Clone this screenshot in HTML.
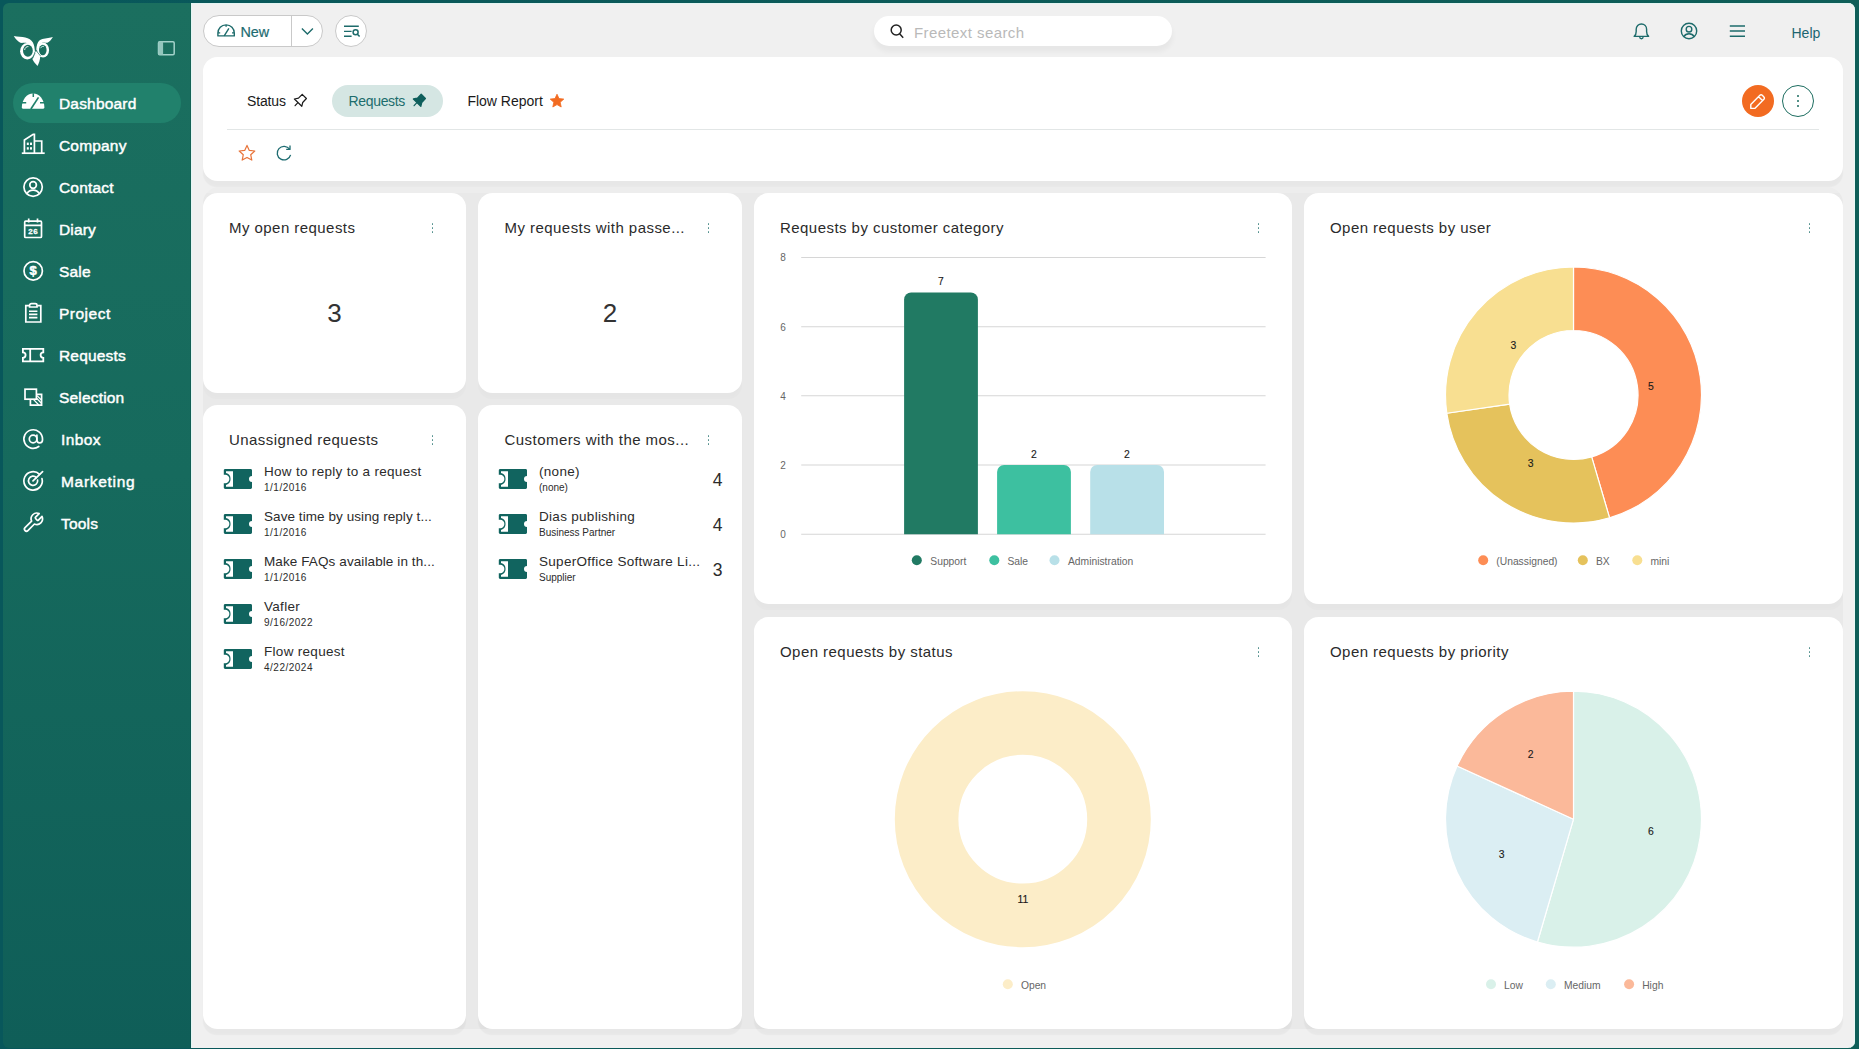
<!DOCTYPE html>
<html lang="en">
<head>
<meta charset="utf-8">
<title>Dashboard</title>
<style>
*{box-sizing:border-box;margin:0;padding:0}
html,body{width:1859px;height:1049px;overflow:hidden;background:#0d5c5a;font-family:"Liberation Sans",sans-serif;color:#2b2b2b}
.abs{position:absolute}
#frame{position:absolute;left:0;top:0;width:1859px;height:1049px;background:linear-gradient(90deg,#08575b 0%,#0c5b59 50%,#0e5e58 100%)}
#side{position:absolute;left:3px;top:3px;width:188px;height:1045px;border-radius:6px 0 0 6px;box-shadow:inset -1px 0 0 rgba(0,40,40,.16);background:linear-gradient(180deg,#1b6f5f 0%,#166a5d 45%,#0f5e58 100%)}
#main{position:absolute;left:191px;top:3px;width:1664px;height:1045px;background:#f0f0f0;border-radius:0 7px 7px 0;box-shadow:inset 1px 0 0 #e3f6f4,inset -1px 0 0 #e9f8f6,inset 0 1px 0 #e3f4f2}
.nav{position:absolute;left:10.4px;width:167.8px;height:40px;border-radius:20px;color:#fff;font-size:15.5px;letter-spacing:.18px;-webkit-text-stroke:.45px #fff}
.nav.on{background:#21816c}
.nav span{position:absolute;margin-left:.6px;top:11.2px;line-height:20px;white-space:nowrap}
.nav svg{position:absolute;left:7.6px;top:7.5px;width:24px;height:24px;overflow:visible}
.card{position:absolute;background:#fff;border-radius:14.5px;box-shadow:0 6.5px 1.2px -.6px rgba(0,0,0,.035)}
.card.in{box-shadow:0 6.5px 1.2px -.6px rgba(0,0,0,.016)}
#grid{position:absolute;left:12px;top:184px;width:1640px;height:842px;border-radius:16px;background:linear-gradient(180deg,#ededed 0,#ededed 6px,#e9e9e9 6px)}
.ttl{position:absolute;left:26px;top:25.3px;font-size:15px;line-height:20px;color:#2b2b2b;white-space:nowrap;letter-spacing:.45px}
.dots{position:absolute;top:30px;width:3px;height:11px}
.dots i{position:absolute;left:0;width:1.8px;height:1.8px;border-radius:1px;background:#4d8d8a}
.dots i:nth-child(1){top:0}.dots i:nth-child(2){top:4px}.dots i:nth-child(3){top:8px}
.big{position:absolute;left:0;right:0;text-align:center;top:104px;font-size:26px;line-height:32px;color:#333}
.row{position:absolute;left:0;right:0;height:45px}
.row svg{position:absolute;left:20.2px;top:11.5px;width:30px;height:22px}
.row b{position:absolute;left:61px;top:6.5px;font-weight:normal;font-size:13.5px;line-height:17px;color:#2b2b2b;white-space:nowrap}
.row small{position:absolute;left:61px;top:25.3px;text-decoration:none;font-size:10px;line-height:12px;color:#2b2b2b;white-space:nowrap}
.row em{position:absolute;right:19.5px;top:11.7px;font-style:normal;font-size:17.5px;line-height:24px;color:#2b2b2b}
.tab{font-size:14px;line-height:18px;color:#1a1a1a;white-space:nowrap}
svg text{font-family:"Liberation Sans",sans-serif}
</style>
</head>
<body>
<div id="frame">
<div id="side">
  <svg class="abs" style="left:7px;top:29px;width:48px;height:38px" viewBox="10 32 48 38">
    <g fill="#fff">
      <ellipse cx="27.3" cy="51.2" rx="7.2" ry="8.2"/>
      <ellipse cx="43.1" cy="50" rx="6" ry="7.45"/>
      <path d="M13.8 36.1C17.6 36.9 22 36.9 25.3 37.6C28.6 38.3 31.4 40 32.9 42.6C34.2 45 34.7 48 34.8 51.6L33.2 54.4C33 49.4 31.4 45 27.4 43.2C24.6 42.4 22.4 43.2 20.3 42.8C17.8 41.6 15.6 39.2 13.8 36.1Z"/>
      <path d="M52.9 37.1C50.6 38 46 38.4 42.4 39C39.8 39.6 38 41.4 37.1 44.5C36.6 46.2 36.4 48 36.3 49.6L37.4 51.6C37.6 47.4 39.4 43.6 43 42.6C45 42.6 46.2 43 47.4 42.8C49.6 41.6 51.4 39.8 52.9 37.1Z"/>
      <path d="M36 50.8L38.4 52.6L40.3 56.3C40 60 39 63.4 37.5 66C35.4 63.8 33.6 61.6 32.4 59L34.5 53.6Z"/>
    </g>
    <g fill="#1a6e5e">
      <ellipse cx="27.9" cy="50.7" rx="4.9" ry="6"/>
      <ellipse cx="42.8" cy="50" rx="3.8" ry="5.3"/>
    </g>
    <path d="M35.1 52.8L32.6 58.6M36.4 51L40.6 56" fill="none" stroke="#1a6e5e" stroke-width=".7"/>
    <path d="M24.6 50C25 47.6 26.6 46.4 28.4 46.6" fill="none" stroke="#fff" stroke-width=".9"/>
    <path d="M40.6 48.2C41.2 46.6 42.6 46 44 46.4" fill="none" stroke="#c8f3ea" stroke-width=".9"/>
  </svg>
  <svg class="abs" style="left:154px;top:37px;width:19px;height:17px" viewBox="0 0 19 17">
    <rect x="1.5" y="1.7" width="15.7" height="13" rx="1.2" fill="none" stroke="#a3d2ca" stroke-width="1.5"/>
    <rect x="1.5" y="1.7" width="4.6" height="13" fill="#93c6bd"/>
  </svg>

  <div class="nav on" style="top:80px"><svg viewBox="0 .8 24 24"><path d="M.8 17.4 C.8 9.6 5.8 3.4 12.1 3.4 C18.4 3.4 23.4 9.6 23.4 17.4 C23.4 18.1 22.9 18.5 22.3 18.5 H1.9 C1.3 18.5 .8 18.1 .8 17.4Z" fill="#fff"/><g stroke="#21816c" stroke-width="1.5" fill="none"><path d="M9.9 18.8 L17.5 7.2" stroke-width="1.7"/><path d="M.5 12.6H5.2M19 12.6H23.8M12.3 3V6.8"/></g></svg><span style="left:45px">Dashboard</span></div>

  <div class="nav" style="top:122px"><svg viewBox="0 .6 24 24"><g fill="none" stroke="#fff" stroke-width="1.7"><path d="M.8 20.8H23.7"/><path d="M3.4 20.8V7.6L12.2 2H13.4V20.8"/><path d="M13.4 8.6H20.7V20.8"/></g><g fill="#fff"><rect x="5.8" y="10.2" width="2" height="2.4"/><rect x="9" y="10.2" width="2" height="2.4"/><rect x="5.8" y="14.8" width="2" height="2.4"/><rect x="9" y="14.8" width="2" height="2.4"/></g></svg><span style="left:45px">Company</span></div>

  <div class="nav" style="top:164px"><svg viewBox="0 0 24 24"><g fill="none" stroke="#fff" stroke-width="1.7"><circle cx="12.1" cy="12.1" r="9.2"/><circle cx="12.1" cy="10" r="3.3"/><path d="M5.9 18.7C7.3 16.2 9.5 15.2 12.1 15.2C14.7 15.2 16.9 16.2 18.3 18.7"/></g></svg><span style="left:45px">Contact</span></div>

  <div class="nav" style="top:206px"><svg viewBox="0 0 24 24"><g fill="none" stroke="#fff" stroke-width="1.7"><rect x="3.7" y="4.2" width="16.8" height="16.3" rx="1"/><path d="M3.7 8.4H20.5M7.7 1.6V5.4M16.5 1.6V5.4"/></g><text x="12.3" y="17.4" text-anchor="middle" font-size="8" font-weight="bold" fill="#fff" stroke="#fff" stroke-width=".3" letter-spacing=".5">26</text></svg><span style="left:45px">Diary</span></div>

  <div class="nav" style="top:248px"><svg viewBox="0 0 24 24"><circle cx="12.2" cy="11.9" r="9.2" fill="none" stroke="#fff" stroke-width="1.7"/><text x="12.2" y="16.4" text-anchor="middle" font-size="13" font-weight="bold" fill="#fff" stroke="#fff" stroke-width=".5">$</text></svg><span style="left:45px">Sale</span></div>

  <div class="nav" style="top:290px"><svg viewBox="0 0 24 24"><g fill="none" stroke="#fff" stroke-width="1.7"><path d="M8.4 4.6H4.8V21H19.8V4.6H16.2"/><path d="M8.6 6V4.2C8.6 3.2 9.4 2.6 10.4 2.6H14.2C15.2 2.6 16 3.2 16 4.2V6Z"/><path d="M8 10.2H16.4M8 13.4H16.4M8 16.6H16.4" stroke-width="1.6"/></g></svg><span style="left:45px;letter-spacing:.5px">Project</span></div>

  <div class="nav" style="top:332px"><svg viewBox="0 0 24 24"><g fill="none" stroke="#fff" stroke-width="1.8"><path d="M1.9 5.8H22.3V9.4A2.7 2.7 0 0 0 22.3 14.8V18.3H1.9V14.8A2.7 2.7 0 0 0 1.9 9.4Z"/><path d="M9.2 5.8V18.3"/></g></svg><span style="left:45px">Requests</span></div>

  <div class="nav" style="top:374px"><svg viewBox="0 0 24 24"><g fill="none" stroke="#fff" stroke-width="1.7"><rect x="4" y="4.2" width="11.4" height="10"/><path d="M15.4 9.4H20.6V20.2H9.4V14.2"/><path d="M12.6 14.6L17.8 20M15.6 13.2L20.4 18.2M16 10.6L20.4 15" stroke-width="1.3"/></g></svg><span style="left:45px">Selection</span></div>

  <div class="nav" style="top:416px"><svg viewBox="0 0 24 24"><g fill="none" stroke="#fff" stroke-width="1.7" stroke-linecap="round"><circle cx="12.1" cy="12" r="3.8"/><path d="M15.9 8.2v4.9a2.8 2.8 0 0 0 5.6 0v-1.1a9.3 9.3 0 1 0-3.7 7.5"/></g></svg><span style="left:47px;letter-spacing:.4px">Inbox</span></div>

  <div class="nav" style="top:458px"><svg viewBox="0 0 24 24"><g fill="none" stroke="#fff" stroke-width="1.7" stroke-linecap="round"><path d="M18.6 5.4A9.2 9.2 0 1 0 21 9.6"/><path d="M15.4 8.6A4.6 4.6 0 1 0 16.6 11"/><path d="M12 11.8L21.6 2.6"/></g></svg><span style="left:47px;letter-spacing:.7px">Marketing</span></div>

  <div class="nav" style="top:500px"><svg viewBox="0 0 24 24"><path transform="translate(.6 .2) scale(.95)" d="M14.7 6.3a1 1 0 0 0 0 1.4l1.6 1.6a1 1 0 0 0 1.4 0l3.77-3.77a6 6 0 0 1-7.94 7.94l-6.91 6.91a2.12 2.12 0 0 1-3-3l6.91-6.91a6 6 0 0 1 7.94-7.94l-3.76 3.76z" fill="none" stroke="#fff" stroke-width="1.8" stroke-linejoin="round"/></svg><span style="left:47px">Tools</span></div>
</div>
<div id="main">
  <!-- top bar (coords relative to main: abs - (191,3)) -->
  <div class="abs" style="left:12px;top:12px;width:120px;height:32px;border:1px solid #c9c9c9;border-radius:16px;background:#fff"></div>
  <div class="abs" style="left:100px;top:13px;width:1px;height:30px;background:#c9c9c9"></div>
  <svg class="abs" style="left:25px;top:19px;width:20px;height:16px" viewBox="0 0 20 16"><g fill="none" stroke="#1d6b6b" stroke-width="1.4" stroke-linejoin="round"><path d="M1.9 13.9V11.2C1.9 6.4 5.4 2.9 10.1 2.9C14.8 2.9 18.3 6.4 18.3 11.2V13.9Z"/><path d="M8.2 13.9L12.9 6.3M1.9 10.9H4.2M16 10.9H18.3M10.1 2.9V4.8"/></g></svg>
  <div class="abs" style="left:49.5px;top:20px;font-size:14.4px;line-height:18px;color:#1d6b70;letter-spacing:-.1px;-webkit-text-stroke:.2px #1d6b70">New</div>
  <svg class="abs" style="left:109px;top:23px;width:14px;height:10px" viewBox="0 0 14 10"><path d="M1.9 2.6L7.4 8L12.9 2.6" fill="none" stroke="#1d6b6b" stroke-width="1.4"/></svg>
  <div class="abs" style="left:144.2px;top:11.8px;width:32px;height:32px;border:1px solid #c9c9c9;border-radius:16px;background:#fff"></div>
  <svg class="abs" style="left:150px;top:20px;width:20px;height:16px" viewBox="0 0 20 16"><g fill="none" stroke="#1d6b6b" stroke-width="1.4"><path d="M3 3.3H17.8M3 8.4H10.6M3 13.2H10.6"/><circle cx="14.6" cy="9.3" r="2.5" stroke-width="1.5"/><path d="M16.4 11.2L18.6 13.6" stroke-width="1.5"/></g></svg>

  <div class="abs" style="left:683px;top:12.7px;width:298px;height:30.3px;border-radius:15.2px;background:#fff;box-shadow:0 5px 5px 1px rgba(0,0,0,.04)"></div>
  <svg class="abs" style="left:697px;top:19px;width:18px;height:18px" viewBox="0 0 18 18"><g fill="none" stroke="#222" stroke-width="1.5"><circle cx="8.2" cy="8" r="5"/><path d="M11.6 11.8L15.2 15.8"/></g></svg>
  <div class="abs" style="left:723px;top:19.8px;font-size:15px;line-height:20px;color:#b9b9b9;letter-spacing:.42px">Freetext search</div>

  <svg class="abs" style="left:1440px;top:18px;width:20px;height:20px" viewBox="0 0 20 20"><g fill="none" stroke="#1d6b6b" stroke-width="1.4" stroke-linejoin="round"><path d="M3.2 15.4C4.8 14 5.2 12.6 5.2 10.4V8.2C5.2 5.2 7.4 3 10.4 3C13.4 3 15.6 5.2 15.6 8.2V10.4C15.6 12.6 16 14 17.6 15.4Z"/><path d="M8.6 16.2C8.8 17.2 9.5 17.7 10.4 17.7C11.3 17.7 12 17.2 12.2 16.2"/></g></svg>
  <svg class="abs" style="left:1488px;top:18px;width:20px;height:20px" viewBox="0 0 20 20"><g fill="none" stroke="#1d6b6b" stroke-width="1.4"><circle cx="10" cy="10" r="7.7"/><circle cx="10" cy="8.2" r="2.8"/><path d="M4.9 15.6C6 13.5 7.8 12.7 10 12.7C12.2 12.7 14 13.5 15.1 15.6"/></g></svg>
  <svg class="abs" style="left:1536px;top:18px;width:20px;height:20px" viewBox="0 0 20 20"><path d="M2.8 5H18M2.8 10.1H18M2.8 15.3H18" fill="none" stroke="#1d6b6b" stroke-width="1.5"/></svg>
  <div class="abs" style="left:1600.5px;top:20.5px;font-size:14px;line-height:18px;color:#1c6570">Help</div>
  <!-- header card -->
  <div class="card" style="left:12px;top:54px;width:1640px;height:123.5px">
    <div class="abs tab" style="left:44px;top:35px;letter-spacing:-.15px">Status</div>
    <svg class="abs" style="left:90px;top:36px;width:16px;height:16px" viewBox="0 0 16 16"><path d="M9.2 1.3L13.4 5.5L9.7 9.5L8.8 13.3L1.4 6L5.5 5.1ZM4.7 9.9L2.1 12.7" fill="none" stroke="#1a1a1a" stroke-width="1.2" stroke-linejoin="round" stroke-linecap="round"/></svg>
    <div class="abs" style="left:129px;top:28px;width:111px;height:31.6px;border-radius:16px;background:#d5e6e3"></div>
    <div class="abs tab" style="left:145.5px;top:35px;color:#1d6d6d;letter-spacing:-.33px">Requests</div>
    <svg class="abs" style="left:209.2px;top:36px;width:16px;height:16px" viewBox="0 0 16 16"><path d="M9.2 1.3L13.4 5.5L9.7 9.5L8.8 13.3L1.4 6L5.5 5.1Z" fill="#0f5f5c" stroke="#0f5f5c" stroke-width="1.3" stroke-linejoin="round"/><path d="M4.7 9.9L2.1 12.7" fill="none" stroke="#0f5f5c" stroke-width="1.2" stroke-linecap="round"/></svg>
    <div class="abs tab" style="left:264.4px;top:35px">Flow Report</div>
    <svg class="abs" style="left:346px;top:36px;width:16px;height:16px" viewBox="0 0 16 16"><path d="M8 1.2L10 5.6L14.8 6.1L11.2 9.3L12.2 14L8 11.6L3.8 14L4.8 9.3L1.2 6.1L6 5.6Z" fill="#f26b21" stroke="#f26b21" stroke-width=".8" stroke-linejoin="round"/></svg>
    <div class="abs" style="left:24px;top:72px;width:1592px;height:1px;background:#e2e6e6"></div>
    <svg class="abs" style="left:34px;top:86px;width:20px;height:20px" viewBox="0 0 20 20"><path d="M10 2.4L12.3 7.4L17.8 8L13.7 11.7L14.8 17.1L10 14.4L5.2 17.1L6.3 11.7L2.2 8L7.7 7.4Z" fill="none" stroke="#e8743a" stroke-width="1.2" stroke-linejoin="round"/></svg>
    <svg class="abs" style="left:71px;top:86px;width:20px;height:20px" viewBox="0 0 20 20"><g fill="none" stroke="#1d6b70" stroke-width="1.3"><path d="M15.6 6.2A6.8 6.8 0 1 0 16.6 11.8"/><path d="M12.2 6.4H16V2.6" stroke-linejoin="round"/></g></svg>
    <div class="abs" style="left:1539px;top:27.5px;width:32px;height:32px;border-radius:16px;background:#f26b21"></div>
    <svg class="abs" style="left:1545px;top:33.5px;width:20px;height:20px" viewBox="0 0 20 20"><path d="M2.8 13.4L11.9 4.3C12.6 3.6 13.6 3.6 14.3 4.3L15.9 5.9C16.6 6.6 16.6 7.6 15.9 8.3L6.8 17.4H2.8ZM10.6 5.7L14.5 9.6" fill="none" stroke="#fff" stroke-width="1.4" stroke-linejoin="round" transform="rotate(0 10 10)"/></svg>
    <div class="abs" style="left:1579px;top:27.5px;width:32px;height:32px;border-radius:16px;border:1px solid #1d6d60;background:#fff"></div>
    <div class="abs" style="left:1594px;top:37.5px;width:2px;height:2px;border-radius:1px;background:#1d6d60;box-shadow:0 5px 0 #1d6d60,0 10px 0 #1d6d60"></div>
  </div>
  <div id="grid"></div>
  <!--CARDS-BEGIN-->
  <div class="card in" style="left:12px;top:190px;width:263px;height:200px"><div class="ttl">My open requests</div><div class="dots" style="right:31.5px"><i></i><i></i><i></i></div><div class="big">3</div></div>
  <div class="card in" style="left:287px;top:190px;width:264px;height:200px"><div class="ttl" style="left:26.5px">My requests with passe...</div><div class="dots" style="right:31.5px"><i></i><i></i><i></i></div><div class="big">2</div></div>
  <div class="card" style="left:12px;top:402px;width:263px;height:624px"><div class="ttl" style="top:24.8px">Unassigned requests</div><div class="dots" style="right:31.5px"><i></i><i></i><i></i></div>
    <div class="row" style="top:51.5px"><svg viewBox="0 0 30 22"><path d="M2.2 1H27.6C28.4 1 29 1.6 29 2.4V8A3 3 0 0 0 29 14V19.6C29 20.4 28.4 21 27.6 21H2.2C1.4 21 .8 20.4 .8 19.6V15.2H2.2A4.1 4.1 0 0 0 2.2 6.8H.8V2.4C.8 1.6 1.4 1 2.2 1Z" fill="#11645f"/><path d="M3 3.2H10V18.8H3V16.9A6.1 6.1 0 0 0 3 5.1Z" fill="#fff"/></svg><b style="letter-spacing:0.3px">How to reply to a request</b><small style="letter-spacing:.5px">1/1/2016</small></div>
    <div class="row" style="top:96.5px"><svg viewBox="0 0 30 22"><path d="M2.2 1H27.6C28.4 1 29 1.6 29 2.4V8A3 3 0 0 0 29 14V19.6C29 20.4 28.4 21 27.6 21H2.2C1.4 21 .8 20.4 .8 19.6V15.2H2.2A4.1 4.1 0 0 0 2.2 6.8H.8V2.4C.8 1.6 1.4 1 2.2 1Z" fill="#11645f"/><path d="M3 3.2H10V18.8H3V16.9A6.1 6.1 0 0 0 3 5.1Z" fill="#fff"/></svg><b style="letter-spacing:0.07px">Save time by using reply t...</b><small style="letter-spacing:.5px">1/1/2016</small></div>
    <div class="row" style="top:141.5px"><svg viewBox="0 0 30 22"><path d="M2.2 1H27.6C28.4 1 29 1.6 29 2.4V8A3 3 0 0 0 29 14V19.6C29 20.4 28.4 21 27.6 21H2.2C1.4 21 .8 20.4 .8 19.6V15.2H2.2A4.1 4.1 0 0 0 2.2 6.8H.8V2.4C.8 1.6 1.4 1 2.2 1Z" fill="#11645f"/><path d="M3 3.2H10V18.8H3V16.9A6.1 6.1 0 0 0 3 5.1Z" fill="#fff"/></svg><b style="letter-spacing:0.1px">Make FAQs available in th...</b><small style="letter-spacing:.5px">1/1/2016</small></div>
    <div class="row" style="top:186.5px"><svg viewBox="0 0 30 22"><path d="M2.2 1H27.6C28.4 1 29 1.6 29 2.4V8A3 3 0 0 0 29 14V19.6C29 20.4 28.4 21 27.6 21H2.2C1.4 21 .8 20.4 .8 19.6V15.2H2.2A4.1 4.1 0 0 0 2.2 6.8H.8V2.4C.8 1.6 1.4 1 2.2 1Z" fill="#11645f"/><path d="M3 3.2H10V18.8H3V16.9A6.1 6.1 0 0 0 3 5.1Z" fill="#fff"/></svg><b style="letter-spacing:0.3px">Vafler</b><small style="letter-spacing:.5px">9/16/2022</small></div>
    <div class="row" style="top:231.5px"><svg viewBox="0 0 30 22"><path d="M2.2 1H27.6C28.4 1 29 1.6 29 2.4V8A3 3 0 0 0 29 14V19.6C29 20.4 28.4 21 27.6 21H2.2C1.4 21 .8 20.4 .8 19.6V15.2H2.2A4.1 4.1 0 0 0 2.2 6.8H.8V2.4C.8 1.6 1.4 1 2.2 1Z" fill="#11645f"/><path d="M3 3.2H10V18.8H3V16.9A6.1 6.1 0 0 0 3 5.1Z" fill="#fff"/></svg><b style="letter-spacing:0.3px">Flow request</b><small style="letter-spacing:.5px">4/22/2024</small></div>
  </div>
  <div class="card" style="left:287px;top:402px;width:264px;height:624px"><div class="ttl" style="left:26.5px;top:24.8px">Customers with the mos...</div><div class="dots" style="right:31.5px"><i></i><i></i><i></i></div>
    <div class="row" style="top:51.5px"><svg viewBox="0 0 30 22"><path d="M2.2 1H27.6C28.4 1 29 1.6 29 2.4V8A3 3 0 0 0 29 14V19.6C29 20.4 28.4 21 27.6 21H2.2C1.4 21 .8 20.4 .8 19.6V15.2H2.2A4.1 4.1 0 0 0 2.2 6.8H.8V2.4C.8 1.6 1.4 1 2.2 1Z" fill="#11645f"/><path d="M3 3.2H10V18.8H3V16.9A6.1 6.1 0 0 0 3 5.1Z" fill="#fff"/></svg><b style="letter-spacing:0.3px">(none)</b><small>(none)</small><em>4</em></div>
    <div class="row" style="top:96.5px"><svg viewBox="0 0 30 22"><path d="M2.2 1H27.6C28.4 1 29 1.6 29 2.4V8A3 3 0 0 0 29 14V19.6C29 20.4 28.4 21 27.6 21H2.2C1.4 21 .8 20.4 .8 19.6V15.2H2.2A4.1 4.1 0 0 0 2.2 6.8H.8V2.4C.8 1.6 1.4 1 2.2 1Z" fill="#11645f"/><path d="M3 3.2H10V18.8H3V16.9A6.1 6.1 0 0 0 3 5.1Z" fill="#fff"/></svg><b style="letter-spacing:0.3px">Dias publishing</b><small>Business Partner</small><em>4</em></div>
    <div class="row" style="top:141.5px"><svg viewBox="0 0 30 22"><path d="M2.2 1H27.6C28.4 1 29 1.6 29 2.4V8A3 3 0 0 0 29 14V19.6C29 20.4 28.4 21 27.6 21H2.2C1.4 21 .8 20.4 .8 19.6V15.2H2.2A4.1 4.1 0 0 0 2.2 6.8H.8V2.4C.8 1.6 1.4 1 2.2 1Z" fill="#11645f"/><path d="M3 3.2H10V18.8H3V16.9A6.1 6.1 0 0 0 3 5.1Z" fill="#fff"/></svg><b style="letter-spacing:0.3px">SuperOffice Software Li...</b><small>Supplier</small><em>3</em></div>
  </div>
  <div class="card in" style="left:563px;top:190px;width:538px;height:411px"><div class="ttl">Requests by customer category</div><div class="dots" style="right:31.5px"><i></i><i></i><i></i></div><svg class="abs" style="left:0;top:0" width="538" height="411" viewBox="0 0 538 411"><path d="M47.2 64.5H511.6" stroke="#d6d6d6" stroke-width="1.1"/><text x="29" y="68.4" text-anchor="middle" font-size="10" fill="#666">8</text><path d="M47.2 133.7H511.6" stroke="#d6d6d6" stroke-width="1.1"/><text x="29" y="137.6" text-anchor="middle" font-size="10" fill="#666">6</text><path d="M47.2 202.8H511.6" stroke="#d6d6d6" stroke-width="1.1"/><text x="29" y="206.7" text-anchor="middle" font-size="10" fill="#666">4</text><path d="M47.2 272.0H511.6" stroke="#d6d6d6" stroke-width="1.1"/><text x="29" y="275.9" text-anchor="middle" font-size="10" fill="#666">2</text><path d="M47.2 341.2H511.6" stroke="#d6d6d6" stroke-width="1.1"/><text x="29" y="345.1" text-anchor="middle" font-size="10" fill="#666">0</text><path d="M150.1 341.2V106.4A7 7 0 0 1 157.1 99.4H216.89999999999998A7 7 0 0 1 223.89999999999998 106.4V341.2Z" fill="#217a63"/><path d="M243.1 341.2V278.9A7 7 0 0 1 250.1 271.9H309.9A7 7 0 0 1 316.9 278.9V341.2Z" fill="#3dc0a0"/><path d="M336.2 341.2V278.9A7 7 0 0 1 343.2 271.9H403.0A7 7 0 0 1 410.0 278.9V341.2Z" fill="#b8e0e8"/><text x="187" y="92.39999999999999" text-anchor="middle" font-size="10.4" fill="#1a1a1a" stroke="#1a1a1a" stroke-width=".12">7</text><text x="280" y="265.40000000000003" text-anchor="middle" font-size="10.4" fill="#1a1a1a" stroke="#1a1a1a" stroke-width=".12">2</text><text x="373" y="265.40000000000003" text-anchor="middle" font-size="10.4" fill="#1a1a1a" stroke="#1a1a1a" stroke-width=".12">2</text><circle cx="162.8" cy="367.2" r="5" fill="#217a63"/><text x="176.3" y="371.7" font-size="10.3" fill="#666">Support</text><circle cx="240.3" cy="367.2" r="5" fill="#3dc0a0"/><text x="253.4" y="371.7" font-size="10.3" fill="#666">Sale</text><circle cx="300.5" cy="367.2" r="5" fill="#b8e0e8"/><text x="314" y="371.7" font-size="10.3" fill="#666">Administration</text></svg></div>
  <div class="card in" style="left:1113px;top:190px;width:539px;height:411px"><div class="ttl">Open requests by user</div><div class="dots" style="right:31.5px"><i></i><i></i><i></i></div><svg class="abs" style="left:0;top:0" width="539" height="411" viewBox="0 0 539 411"><path d="M269.50 74.00A128 128 0 0 1 305.56 324.82L287.67 263.89A64.5 64.5 0 0 0 269.50 137.50Z" fill="#fd8d55" stroke="#fff" stroke-width="1.2" stroke-linejoin="round"/><path d="M305.56 324.82A128 128 0 0 1 142.80 220.22L205.66 211.18A64.5 64.5 0 0 0 287.67 263.89Z" fill="#e5c25c" stroke="#fff" stroke-width="1.2" stroke-linejoin="round"/><path d="M142.80 220.22A128 128 0 0 1 269.50 74.00L269.50 137.50A64.5 64.5 0 0 0 205.66 211.18Z" fill="#f8df91" stroke="#fff" stroke-width="1.2" stroke-linejoin="round"/><text x="346.8" y="196.5" text-anchor="middle" font-size="10.4" fill="#1a1a1a" stroke="#1a1a1a" stroke-width=".12">5</text><text x="226.7" y="273.6" text-anchor="middle" font-size="10.4" fill="#1a1a1a" stroke="#1a1a1a" stroke-width=".12">3</text><text x="209.5" y="156.29999999999998" text-anchor="middle" font-size="10.4" fill="#1a1a1a" stroke="#1a1a1a" stroke-width=".12">3</text><circle cx="179.2" cy="367.2" r="5" fill="#fd8d55"/><text x="192.3" y="371.7" font-size="10.3" fill="#666">(Unassigned)</text><circle cx="278.8" cy="367.2" r="5" fill="#e5c25c"/><text x="291.9" y="371.7" font-size="10.3" fill="#666">BX</text><circle cx="333.3" cy="367.2" r="5" fill="#f8df91"/><text x="346.4" y="371.7" font-size="10.3" fill="#666">mini</text></svg></div>
  <div class="card" style="left:563px;top:614px;width:538px;height:412px"><div class="ttl" style="top:25.3px">Open requests by status</div><div class="dots" style="right:31.5px"><i></i><i></i><i></i></div><svg class="abs" style="left:0;top:0" width="538" height="412" viewBox="0 0 538 412"><circle cx="268.8" cy="202.2" r="96.2" fill="none" stroke="#fcedc8" stroke-width="63.6"/><text x="269" y="286.40000000000003" text-anchor="middle" font-size="10.4" fill="#1a1a1a" stroke="#1a1a1a" stroke-width=".12">11</text><circle cx="253.8" cy="367.3" r="5" fill="#fcedc8"/><text x="266.9" y="371.8" font-size="10.3" fill="#666">Open</text></svg></div>
  <div class="card" style="left:1113px;top:614px;width:539px;height:412px"><div class="ttl" style="top:25.3px">Open requests by priority</div><div class="dots" style="right:31.5px"><i></i><i></i><i></i></div><svg class="abs" style="left:0;top:0" width="539" height="412" viewBox="0 0 539 412"><path d="M269.5 202.2L269.50 74.20A128 128 0 1 1 233.44 325.02Z" fill="#d9f1e9" stroke="#fff" stroke-width="1.2" stroke-linejoin="round"/><path d="M269.5 202.2L233.44 325.02A128 128 0 0 1 153.07 149.03Z" fill="#dbeef3" stroke="#fff" stroke-width="1.2" stroke-linejoin="round"/><path d="M269.5 202.2L153.07 149.03A128 128 0 0 1 269.50 74.20Z" fill="#fbb99a" stroke="#fff" stroke-width="1.2" stroke-linejoin="round"/><text x="346.8" y="218.4" text-anchor="middle" font-size="10.4" fill="#1a1a1a" stroke="#1a1a1a" stroke-width=".12">6</text><text x="197.6" y="240.5" text-anchor="middle" font-size="10.4" fill="#1a1a1a" stroke="#1a1a1a" stroke-width=".12">3</text><text x="226.7" y="141.4" text-anchor="middle" font-size="10.4" fill="#1a1a1a" stroke="#1a1a1a" stroke-width=".12">2</text><circle cx="187" cy="367.3" r="5" fill="#d9f1e9"/><text x="200.1" y="371.8" font-size="10.3" fill="#666">Low</text><circle cx="246.8" cy="367.3" r="5" fill="#dbeef3"/><text x="259.9" y="371.8" font-size="10.3" fill="#666">Medium</text><circle cx="325.1" cy="367.3" r="5" fill="#fbb99a"/><text x="338.2" y="371.8" font-size="10.3" fill="#666">High</text></svg></div>
  <!--CARDS-END-->
</div>
</div>
</body>
</html>
